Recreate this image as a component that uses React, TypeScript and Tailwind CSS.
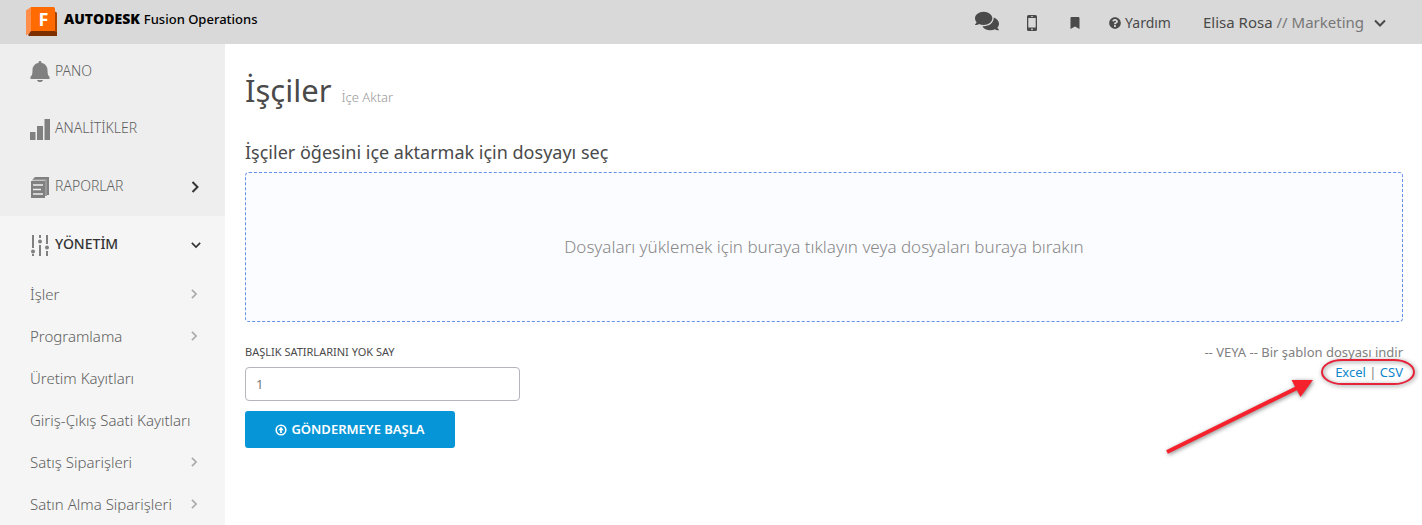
import React from "react";
import { FaBookmark, FaComments, FaQuestionCircle } from "react-icons/fa";

type ChevronProps = { className: string; down?: boolean };

function Chevron({ className, down = false }: ChevronProps) {
  return (
    <svg viewBox="0 0 12 12" className={className} fill="none" stroke="currentColor" strokeWidth="2" aria-hidden="true">
      <path d={down ? "M1 3.5 6 8.5 11 3.5" : "M3.5 1 8.5 6 3.5 11"} />
    </svg>
  );
}

function FusionLogo() {
  return (
    <svg viewBox="0 0 32 30" className="h-[30px] w-8 shrink-0" aria-hidden="true">
      <path d="M0 3.5 5 0v25L0 28.5z" fill="#ff8f4a" />
      <path d="M5 0h22.5q1.500 0 1.500 1.500V25H5z" fill="#ff6b00" />
      <path d="M29 4.500 31 6v23H29z" fill="#983b00" />
      <path d="M5 24h26v3.500q0 1.500-1.500 1.500H3l-1-1z" fill="#7d2f00" />
      <path d="M29 5l2 1v19l-2 0z" fill="#a84300" />
      <text x="12.500" y="18.500" fill="#fff" fontSize="18" fontWeight="700" fontFamily="Noto Sans, sans-serif">F</text>
    </svg>
  );
}

function BellIcon() {
  return (
    <svg viewBox="0 0 20 22" className="h-[22px] w-5" fill="#808080" aria-hidden="true">
      <path d="M10 0c.9 0 1.500.6 1.500 1.500v.4C15.200 2.500 17.500 5.500 17.500 9c0 4 .5 5.500 2 6.800V18H.5v-2.200C2 14.500 2.500 13 2.500 9c0-3.500 2.300-6.500 6-7.100v-.4C8.500.6 9.100 0 10 0z" />
      <path d="M7 19h6c-.4 1.400-1.500 2-3 2s-2.600-.6-3-2z" />
    </svg>
  );
}

function BarsIcon() {
  return (
    <svg viewBox="0 0 20 22" className="h-[22px] w-5" fill="#808080" aria-hidden="true">
      <path d="M0 14h5.500v8H0zM7 8h6v14H7zM14.500 1H20v21h-5.500z" />
    </svg>
  );
}

function ReportsIcon() {
  return (
    <svg viewBox="0 0 20 22" className="h-[22px] w-5" aria-hidden="true">
      <path d="M5 1h14v18h-2V3H3z" fill="#808080" />
      <path d="M3 3h14v17h-2V4.500H2z" fill="#999" />
      <path d="M1 5h14v17H1z" fill="#808080" />
      <path d="M3 9h10M3 13.500h8M3 18h10" stroke="#eee" strokeWidth="1.500" />
    </svg>
  );
}

function SlidersIcon() {
  return (
    <svg viewBox="0 0 20 22" className="h-[22px] w-5" fill="#808080" aria-hidden="true">
      <path d="M2 1h2v13H2zM2 20h2v2H2zM9 1h2v3H9zM9 11h2v11H9zM16 1h2v9h-2zM16 17h2v5h-2z" />
      <circle cx="3" cy="17.500" r="2" />
      <circle cx="10" cy="7.500" r="2" />
      <circle cx="17" cy="13.500" r="2" />
    </svg>
  );
}

function PhoneIcon() {
  return (
    <svg viewBox="0 0 10 16" className="h-4 w-2.5" aria-hidden="true">
      <path fillRule="evenodd" fill="#4a4a4a" d="M1.500 0h7Q10 0 10 1.500v13q0 1.500-1.500 1.500h-7Q0 16 0 14.500v-13Q0 0 1.500 0zM1.300 3v9.500h7.400V3zM4 1v.8h2V1zM5 13.500a.8.8 0 1 0 .01 0z" />
    </svg>
  );
}

function UploadIcon() {
  return (
    <svg viewBox="0 0 12 12" className="size-3" fill="none" stroke="#fff" strokeWidth="1.600" aria-hidden="true">
      <circle cx="6" cy="6" r="4.800" />
      <path d="M6 2.800 3.200 6.200h1.900V9h1.800V6.200h1.900z" fill="#fff" stroke="none" />
    </svg>
  );
}

const mainItems = [
  { label: "PANO", icon: <BellIcon />, more: false, height: "h-14" },
  { label: "ANALİTİKLER", icon: <BarsIcon />, more: false, height: "h-[58px]" },
  { label: "RAPORLAR", icon: <ReportsIcon />, more: true, height: "h-[58px]" },
];

const subItems = [
  { label: "İşler", more: true },
  { label: "Programlama", more: true },
  { label: "Üretim Kayıtları", more: false },
  { label: "Giriş-Çıkış Saati Kayıtları", more: false },
  { label: "Satış Siparişleri", more: true },
  { label: "Satın Alma Siparişleri", more: true },
];

function Header() {
  return (
    <header className="flex h-11 items-center justify-between bg-[#d9d9d9] pr-9 pl-[26px]">
      <a href="#" className="flex items-center gap-1.5 text-[13px] whitespace-nowrap text-black">
        <FusionLogo />
        <span className="flex items-baseline gap-1 pb-1.5">
          <b className="font-['Open_Sans',sans-serif] text-sm font-extrabold">AUTODESK</b>
          <span className="font-medium">Fusion Operations</span>
        </span>
      </a>
      <nav className="flex items-center pt-0.5 text-sm whitespace-nowrap text-[#4a4a4a]">
        <button type="button" aria-label="Mesajlar" className="mr-7 pb-1"><FaComments className="size-6" /></button>
        <button type="button" aria-label="Mobil" className="mr-8"><PhoneIcon /></button>
        <button type="button" aria-label="Yer imleri" className="mr-7"><FaBookmark className="size-3" /></button>
        <a href="#" className="mr-8 flex items-center gap-1"><FaQuestionCircle className="size-3" />Yardım</a>
        <button type="button" className="flex items-center gap-2.5 text-[15px]">
          <span>Elisa Rosa <span className="text-[#777]">// Marketing</span></span>
          <Chevron down className="size-3" />
        </button>
      </nav>
    </header>
  );
}

function Sidebar() {
  return (
    <aside className="w-[225px] shrink-0 bg-[#f5f5f5] text-[15px] text-[#5f5f5f]">
      <ul className="bg-[#eee]">
        {mainItems.map((item) => (
          <li key={item.label}>
            <a href="#" className={`flex items-center gap-[5px] pr-6 pl-[30px] ${item.height}`}>
              {item.icon}
              <span className="flex-1 pb-0.5 text-sm font-light">{item.label}</span>
              {item.more && <Chevron className="size-3 text-[#333]" />}
            </a>
          </li>
        ))}
      </ul>
      <a href="#" className="flex h-[57px] items-center gap-[5px] pr-6 pl-[30px] text-[#333]">
        <SlidersIcon />
        <span className="flex-1 pb-0.5 text-sm font-medium">YÖNETİM</span>
        <Chevron down className="size-2.5" />
      </a>
      <ul>
        {subItems.map((item) => (
          <li key={item.label}>
            <a href="#" className="flex h-[42px] items-center justify-between pr-[26px] pl-[30px] font-light whitespace-nowrap">
              {item.label}
              {item.more && <Chevron className="size-2.5 text-[#aaa]" />}
            </a>
          </li>
        ))}
      </ul>
    </aside>
  );
}

function Callout() {
  return (
    <svg
      viewBox="0 0 260 110"
      className="pointer-events-none absolute -top-2 -right-4 h-[110px] w-[260px] drop-shadow-[1px_1px_2px_rgba(0,0,0,0.5)]"
      fill="none"
      aria-hidden="true"
    >
      <rect x="163" y="6" width="92" height="24" rx="20" ry="12" stroke="#e5243b" strokeWidth="2" />
      <path d="M8 98 140 33" stroke="#f5222d" strokeWidth="4" />
      <path d="M132.500 26h21.500L141.500 43z" fill="#f5222d" />
    </svg>
  );
}

export default function App() {
  return (
    <div className="flex min-h-screen flex-col bg-white font-['Noto_Sans',sans-serif]">
      <Header />
      <div className="flex flex-1">
        <Sidebar />
        <main className="min-w-0 flex-1 pt-[26px] pr-[19px] pl-5 text-[#4a4a4a]">
          <h1 className="flex items-baseline gap-2.5 text-[31px] leading-10">
            İşçiler
            <small className="text-[13px] leading-4 font-light text-[#999]">İçe Aktar</small>
          </h1>
          <h2 className="mt-[30px] text-lg leading-6">İşçiler öğesini içe aktarmak için dosyayı seç</h2>
          <button type="button" className="mt-2 flex h-[150px] w-full items-center justify-center rounded border border-dashed border-[#6690e8] bg-[#fbfcff] text-[17px] font-light text-[#888]">
            Dosyaları yüklemek için buraya tıklayın veya dosyaları buraya bırakın
          </button>
          <div className="mt-5 flex justify-between">
            <form className="flex w-[275px] flex-col items-start">
              <label htmlFor="skip-rows" className="text-[11px] leading-5">BAŞLIK SATIRLARINI YOK SAY</label>
              <input
                id="skip-rows"
                type="text"
                defaultValue="1"
                className="mt-[5px] h-[34px] w-full rounded border border-[#b5b5bd] px-2.5 text-[13px] text-[#777]"
              />
              <button type="button" className="mt-2.5 flex h-[37px] w-[210px] items-center justify-center gap-1 rounded-[3px] bg-[#0696d7] text-[13px] font-semibold text-white">
                <UploadIcon />
                GÖNDERMEYE BAŞLA
              </button>
            </form>
            <div className="text-right text-[13px] leading-5 text-[#808080]">
              <p>-- VEYA -- Bir şablon dosyası indir</p>
              <p className="relative">
                <a href="#" className="text-[#0d87cc]">Excel</a> | <a href="#" className="text-[#0d87cc]">CSV</a>
                <Callout />
              </p>
            </div>
          </div>
        </main>
      </div>
    </div>
  );
}
